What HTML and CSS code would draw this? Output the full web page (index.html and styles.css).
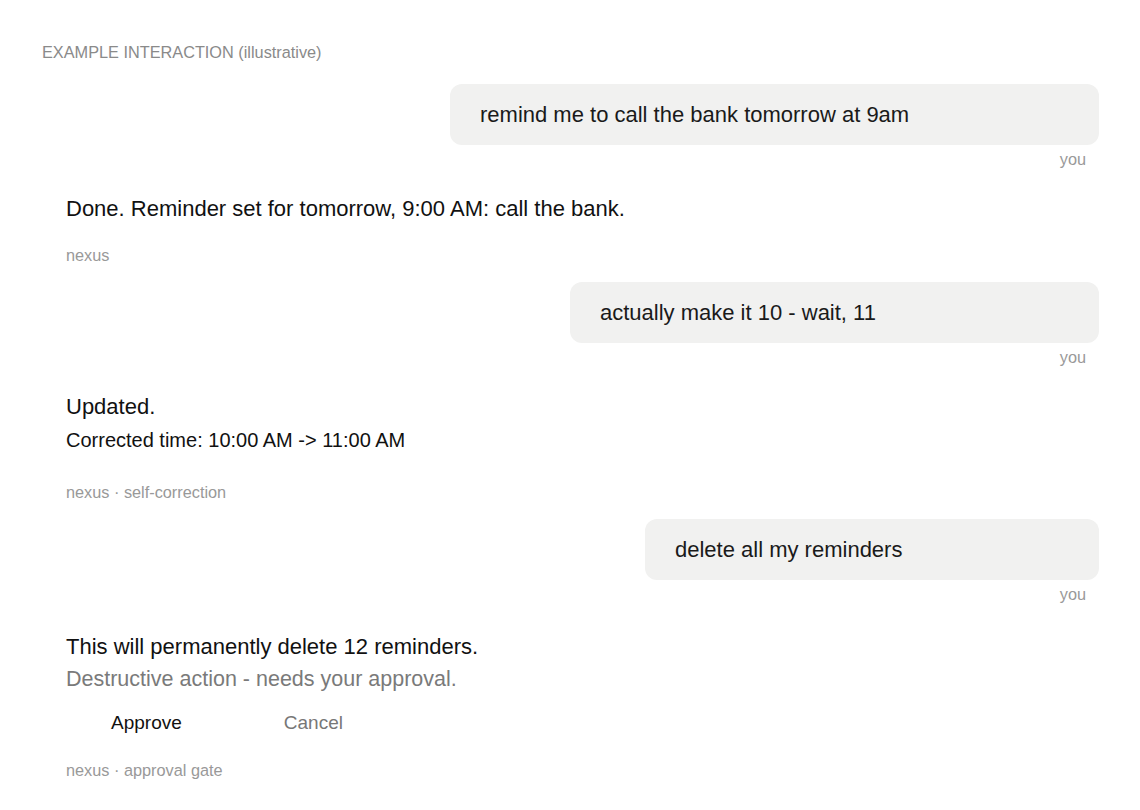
FILE: index.html
```html
<!DOCTYPE html>
<html lang="en">
<head>
	<meta charset="UTF-8">
	<title>Example interaction</title>
	<link rel="stylesheet" href="styles.css">
</head>
<body>
	<div id="page">
		<div id="heading">EXAMPLE INTERACTION (illustrative)</div>
		<div class="turn user">
			<div class="bubble" style="width: 649px;">remind me to call the bank tomorrow at 9am</div>
			<div class="who">you</div>
		</div>
		<div class="turn bot">
			<div class="reply">Done. Reminder set for tomorrow, 9:00 AM: call the bank.</div>
			<div class="who">nexus</div>
		</div>
		<div class="turn user">
			<div class="bubble" style="width: 529px;">actually make it 10 - wait, 11</div>
			<div class="who">you</div>
		</div>
		<div class="turn bot">
			<div class="reply">Updated.</div>
			<div class="detail">Corrected time: 10:00 AM -&gt; 11:00 AM</div>
			<div class="who">nexus · self-correction</div>
		</div>
		<div class="turn user">
			<div class="bubble" style="width: 454px;">delete all my reminders</div>
			<div class="who">you</div>
		</div>
		<div class="turn bot gate">
			<div class="reply">This will permanently delete 12 reminders.</div>
			<div class="warn">Destructive action - needs your approval.</div>
			<div class="actions">
				<button class="btn approve">Approve</button>
				<button class="btn cancel">Cancel</button>
			</div>
			<div class="who">nexus · approval gate</div>
		</div>
	</div>
</body>
</html>
```

FILE: styles.css
```css
*{
	box-sizing: border-box;
	font-family: "Liberation Sans", Arial, sans-serif;
}
body{
	margin: 0;
	background-color: #ffffff;
	color: #111111;
}
#page{
	display: flex;
	flex-direction: column;
	padding: 43px 41px 20px 42px;
}
#heading{
	font-size: 16.3px;
	line-height: 18px;
	color: #8a8a8a;
}
.turn{
	display: flex;
	flex-direction: column;
}
.user{
	align-items: flex-end;
	margin-top: 23px;
}
.user + .bot{
	margin-top: 25px;
}
.bot + .user{
	margin-top: 18px;
}
.bot{
	padding-left: 24px;
}
.user + .gate{
	margin-top: 28px;
}
.bubble{
	background-color: #f1f1f0;
	border-radius: 12px;
	padding: 15px 30px;
	font-size: 22px;
	line-height: 31px;
	color: #1a1a1a;
}
.who{
	font-size: 16.3px;
	line-height: 18px;
	color: #999999;
}
.user .who{
	margin-top: 5px;
	padding-right: 13px;
}
.bot .who{
	margin-top: 22px;
}
.reply{
	font-size: 22px;
	line-height: 31px;
	color: #111111;
}
.detail{
	margin-top: 5px;
	font-size: 20px;
	line-height: 27px;
	color: #111111;
}
.detail + .who{
	margin-top: 29px;
}
.warn{
	margin-top: 2px;
	font-size: 21.5px;
	line-height: 31px;
	color: #7a7a7a;
}
.actions{
	display: flex;
	gap: 12px;
	margin-top: 13px;
}
.btn{
	background: none;
	border: none;
	padding: 4px 45px;
	font-size: 19px;
	line-height: 22px;
	cursor: pointer;
}
.approve{
	color: #111111;
}
.cancel{
	color: #777777;
}
.actions + .who{
	margin-top: 23px;
}
```
